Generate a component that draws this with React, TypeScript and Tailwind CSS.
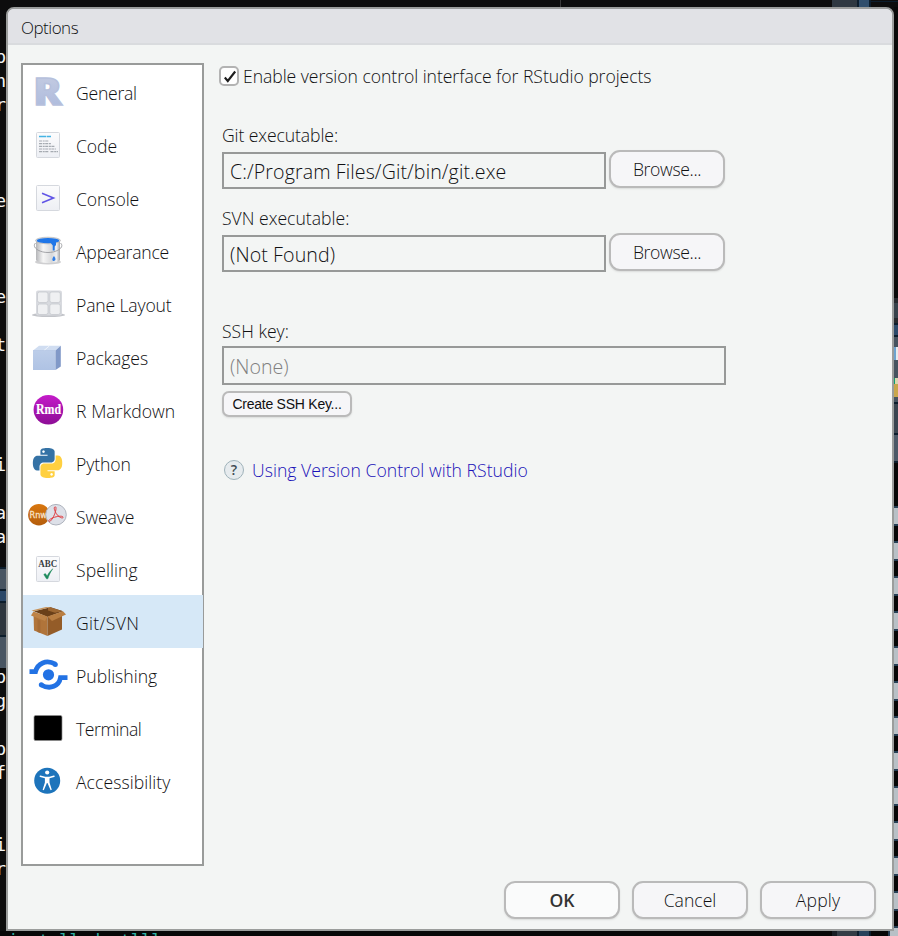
import { ReactNode } from "react";

const PY_TOP =
  "M14.25.18l.9.2.73.26.59.3.45.32.34.34.25.34.16.33.1.3.04.26.02.2-.01.13V8.5l-.05.63-.13.55-.21.46-.26.38-.3.31-.33.25-.35.19-.35.14-.33.1-.3.07-.26.04-.21.02H8.77l-.69.05-.59.14-.5.22-.41.27-.33.32-.27.35-.2.36-.15.37-.1.35-.07.32-.04.27-.02.21v3.06H3.17l-.21-.03-.28-.07-.32-.12-.35-.18-.36-.26-.36-.36-.35-.46-.32-.59-.28-.73-.21-.88-.14-1.05-.05-1.23.06-1.22.16-1.04.24-.87.32-.71.36-.57.4-.44.42-.33.42-.24.4-.16.36-.1.32-.05.24-.01h.16l.06.01h8.16v-.83H6.18l-.01-2.75-.02-.37.05-.34.11-.31.17-.28.25-.26.31-.23.38-.2.44-.18.51-.15.58-.12.64-.1.71-.06.77-.04.84-.02 1.27.05zm-6.3 1.98l-.23.33-.08.41.08.41.23.34.33.22.41.09.41-.09.33-.22.23-.34.08-.41-.08-.41-.23-.33-.33-.22-.41-.09-.41.09z";
const PY_BOTTOM =
  "M21.04 6.11l.28.06.32.12.35.18.36.27.36.35.35.47.32.59.28.73.21.88.14 1.04.05 1.23-.06 1.23-.16 1.04-.24.86-.32.71-.36.57-.4.45-.42.33-.42.24-.4.16-.36.09-.32.05-.24.02-.16-.01h-8.22v.82h5.84l.01 2.76.02.36-.05.34-.11.31-.17.29-.25.25-.31.24-.38.2-.44.17-.51.15-.58.13-.64.09-.71.07-.77.04-.84.01-1.27-.04-1.07-.14-.9-.2-.73-.25-.59-.3-.45-.33-.34-.34-.25-.34-.16-.33-.1-.3-.04-.25-.02-.2.01-.13v-5.34l.05-.64.13-.54.21-.46.26-.38.3-.32.33-.24.35-.2.35-.14.33-.1.3-.06.26-.04.21-.02.13-.01h5.84l.69-.05.59-.14.5-.21.41-.28.33-.32.27-.35.2-.36.15-.36.1-.35.07-.32.04-.28.02-.21V6.07h2.09l.14.01zm-6.47 14.25l-.23.33-.08.41.08.41.23.33.33.23.41.08.41-.08.33-.23.23-.33.08-.41-.08-.41-.23-.33-.33-.23-.41-.08-.41.08z";

function Sheet() {
  return <rect x="8.5" y="14.5" width="23" height="25" rx="1" fill="url(#sheet)" stroke="#d5d8de" />;
}

function Defs() {
  return (
    <svg className="h-0 w-0 shrink-0" aria-hidden="true">
      <defs>
        <linearGradient id="sheet" x1="0" y1="0" x2="0" y2="1">
          <stop offset="0" stopColor="#fcfcfd" />
          <stop offset="1" stopColor="#edeff4" />
        </linearGradient>
        <linearGradient id="rlogo" x1="0" y1="0" x2="0" y2="1">
          <stop offset="0" stopColor="#c9cfe3" />
          <stop offset="1" stopColor="#a9b8dc" />
        </linearGradient>
        <linearGradient id="metal" x1="0" y1="0" x2="1" y2="0">
          <stop offset="0" stopColor="#b4b5b8" />
          <stop offset="0.3" stopColor="#f6f6f6" />
          <stop offset="0.65" stopColor="#d8d9db" />
          <stop offset="0.85" stopColor="#efeff0" />
          <stop offset="1" stopColor="#a2a3a6" />
        </linearGradient>
        <linearGradient id="pkg" x1="0" y1="0" x2="0" y2="1">
          <stop offset="0" stopColor="#bccde9" />
          <stop offset="1" stopColor="#afc3e4" />
        </linearGradient>
        <linearGradient id="rmd" x1="0" y1="0" x2="0" y2="1">
          <stop offset="0" stopColor="#c41bc9" />
          <stop offset="1" stopColor="#8d0e96" />
        </linearGradient>
        <linearGradient id="rnw" x1="0" y1="0" x2="0" y2="1">
          <stop offset="0" stopColor="#d9770f" />
          <stop offset="1" stopColor="#b45d0c" />
        </linearGradient>
      </defs>
    </svg>
  );
}

const items: { label: string; track: string; icon: ReactNode }[] = [
  {
    label: "General",
    track: "tracking-[-0.25px]",
    icon: (
      <text x="5.2" y="39.5" fontSize="36.5" fontWeight="800" fontFamily="Open Sans, sans-serif" textLength="28.5" lengthAdjust="spacingAndGlyphs" fill="url(#rlogo)" stroke="#b6c0dc" strokeWidth="1.4">
        R
      </text>
    ),
  },
  {
    label: "Code",
    track: "tracking-[-0.1px]",
    icon: (
      <>
        <Sheet />
        <path d="M11 18.5h12" stroke="#45b4e4" strokeWidth="1.3" strokeDasharray="7 0.6 5" />
        <path d="M11 23h10M11 25.7h12M11 28.3h16M11 31h17M11 33.7h10M22.5 33.7h7.5" stroke="#a5aab1" strokeWidth="1.2" strokeDasharray="3 0.7 2 0.5" />
      </>
    ),
  },
  {
    label: "Console",
    track: "tracking-[-0.1px]",
    icon: (
      <>
        <Sheet />
        <path d="M14 22.3L25.5 27L14 31.8" fill="none" stroke="#6155e6" strokeWidth="1.6" />
      </>
    ),
  },
  {
    label: "Appearance",
    track: "tracking-[-0.2px]",
    icon: (
      <>
        <ellipse cx="20" cy="38" rx="13" ry="2.5" fill="#cfcfd1" />
        <path d="M8 17v19c2 4 22 4 24 0V17z" fill="url(#metal)" />
        <ellipse cx="20" cy="16.5" rx="12.5" ry="3.3" fill="#d9dadd" stroke="#a9aaad" strokeWidth="0.6" />
        <ellipse cx="20" cy="16.7" rx="11.3" ry="2.6" fill="#1f76e8" />
        <path d="M22 18h6v3l-1.3 1.5v4h-2v-5z" fill="#1f76e8" />
        <path d="M26 32c2 2.5 2 4.500 0 5c-2 0-2.500-2 0-5" fill="#2f7de6" />
        <path d="M7.5 19c-4 4 3 9.500 12.500 9.500s17-5.500 12.500-9.500" fill="none" stroke="#9a9b9f" strokeWidth="0.900" />
      </>
    ),
  },
  {
    label: "Pane Layout",
    track: "tracking-[-0.15px]",
    icon: (
      <>
        <ellipse cx="20.500" cy="38" rx="16.500" ry="2" fill="#c2c4c9" />
        <rect x="8" y="13.500" width="26" height="25" rx="2" fill="#d8dadf" />
        <g fill="#eff0f2" stroke="#c3c6cc" strokeWidth="0.700">
          <rect x="9.500" y="15" width="10.500" height="10.500" rx="2" />
          <rect x="21.800" y="15" width="10.500" height="10.500" rx="2" />
          <rect x="9.500" y="27" width="10.500" height="10.500" rx="2" />
          <rect x="21.800" y="27" width="10.500" height="10.500" rx="2" />
        </g>
      </>
    ),
  },
  {
    label: "Packages",
    track: "tracking-[-0.1px]",
    icon: (
      <>
        <path d="M5 20.500L11 15.800H32.800L27.500 20.500z" fill="#d0ddf1" />
        <path d="M5 20.500H27.500V40H5z" fill="url(#pkg)" />
        <path d="M27.500 20.500L32.800 15.800V36.500L27.500 40z" fill="#8199c8" />
        <path d="M16 20.500L21.500 15.800" stroke="#f2f6fc" strokeWidth="0.900" />
        <path d="M5 20.500H27.500" stroke="#a9bde0" strokeWidth="0.600" />
      </>
    ),
  },
  {
    label: "R Markdown",
    track: "tracking-[0.05px]",
    icon: (
      <>
        <circle cx="20.400" cy="26.700" r="14.800" fill="url(#rmd)" />
        <text x="8" y="30.800" fontSize="14" fontWeight="700" fontFamily="Liberation Serif, serif" textLength="25" lengthAdjust="spacingAndGlyphs" fill="#fff" stroke="#fff" strokeWidth="0.200">
          Rmd
        </text>
      </>
    ),
  },
  {
    label: "Python",
    track: "tracking-[-0.1px]",
    icon: (
      <g transform="translate(4.900 12) scale(1.220 1.250)">
        <path d={PY_TOP} fill="#3572a5" />
        <path d={PY_BOTTOM} fill="#ffd040" />
      </g>
    ),
  },
  {
    label: "Sweave",
    track: "tracking-[-0.15px]",
    icon: (
      <>
        <circle cx="10.900" cy="25.700" r="10.800" fill="url(#rnw)" />
        <text x="1.500" y="28.800" fontSize="9" fontWeight="400" fontFamily="DejaVu Sans, sans-serif" textLength="17.500" lengthAdjust="spacingAndGlyphs" fill="#f8e2c6" stroke="#f8e2c6" strokeWidth="0.300">
          Rnw
        </text>
        <circle cx="28" cy="25.700" r="10.300" fill="#dde0e8" stroke="#aeb3bd" />
        <path
          d="M26.300 18.500c2-2 2 1 1.200 4c-1.200 4.500-4 9-5.700 10c-2.200 0-1-2.500 4.800-4.300c4-1.200 8.500-1.500 8.500 .200c-.500 1.700-5.300-.600-7.600-5.200c-1-2-1.500-4-1.200-4.700z"
          fill="none"
          stroke="#e03a3e"
          strokeWidth="1"
        />
      </>
    ),
  },
  {
    label: "Spelling",
    track: "tracking-[0.05px]",
    icon: (
      <>
        <Sheet />
        <text x="10.300" y="25.200" fontSize="10" fontWeight="700" fontFamily="Liberation Serif, serif" textLength="19" lengthAdjust="spacingAndGlyphs" fill="#3a3f43">
          ABC
        </text>
        <path d="M15.800 32.500l1.500-.900l1.900 2.500c1.200-2.800 3-5.200 5.600-7.300c-2.300 3.200-3.900 6.500-5 10h-1.300z" fill="#1d8a5c" stroke="#1d8a5c" strokeWidth="0.500" />
      </>
    ),
  },
  {
    label: "Git/SVN",
    track: "tracking-[0.3px]",
    icon: (
      <>
        <path d="M5.500 18.500L19.500 22V41L6 35.500z" fill="#b0743a" />
        <path d="M19.500 22L34 18.500V34.500L19.500 41z" fill="#945c28" />
        <path d="M6 16.300L22.500 12.300L35 16.300L19.500 22z" fill="#6b4019" />
        <path d="M20 12.500L22.500 12.300L35 16.300L27 17.800L20 15.500z" fill="#9d6732" />
        <path d="M6 16.300L22.500 12.300L18 11.900L3.500 15.500z" fill="#c8935a" />
        <path d="M5.500 16.500L19.500 21.500L17 26L3 20.500z" fill="#be8347" />
        <path d="M19.500 21.500L35 16.300L38 19.500L24 26z" fill="#b97e42" />
        <path d="M9.500 24.500L12.500 25.500V38L9.500 37z" fill="#a56b34" />
      </>
    ),
  },
  {
    label: "Publishing",
    track: "tracking-[0px]",
    icon: (
      <>
        <circle cx="20.500" cy="26.800" r="5.600" fill="#2272e4" />
        <path d="M1.500 23.600H7.500C9.500 15.500 18 11 27.500 16.200" fill="none" stroke="#2272e4" strokeWidth="4.800" />
        <circle cx="27.300" cy="16.500" r="2.500" fill="#2272e4" />
        <path d="M39.500 29.600H32.500C31 38 22.500 42 13.200 37" fill="none" stroke="#2272e4" strokeWidth="4.800" />
        <circle cx="13.300" cy="36.800" r="2.500" fill="#2272e4" />
      </>
    ),
  },
  {
    label: "Terminal",
    track: "tracking-[-0.45px]",
    icon: <rect x="6" y="14.500" width="28" height="25" rx="1.500" fill="#000" stroke="#8e8e8e" strokeWidth="0.700" />,
  },
  {
    label: "Accessibility",
    track: "tracking-[0.05px]",
    icon: (
      <>
        <circle cx="19.200" cy="26.800" r="13" fill="#1d74bb" />
        <circle cx="19.200" cy="18.500" r="2.100" fill="#fff" />
        <path d="M12.300 22.200L17 23.500H21.500L26 22.200" fill="none" stroke="#fff" strokeWidth="1.500" strokeLinecap="round" />
        <path d="M16.900 23h4.600v5.500l2.300 7.200l-1.200.500l-3.100-7.200h-.600l-3.100 7.200l-1.200-.500l2.300-7.200z" fill="#fff" />
      </>
    ),
  },
];

const leftGlyphs: [string, string][] = [
  ["", "h-[38px]"], ["p", "h-6"], ["n", "h-6"], ["r", "h-6"], ["", "h-[72px]"], ["e", "h-6"], ["", "h-[72px]"],
  ["e", "h-6"], ["", "h-6"], ["t", "h-6"], ["", "h-24"], ["i", "h-6"], ["", "h-6"], ["a", "h-6"], ["a", "h-6"], ["", "h-[18px]"],
];
const leftGlyphsLow: [string, string][] = [
  ["p", "h-6"], ["g", "h-6"], ["", "h-6"], ["p", "h-6"], ["f", "h-6"], ["", "h-12"], ["i", "h-6"], ["r", "h-6"],
];

function Glyphs({ rows }: { rows: [string, string][] }) {
  return (
    <>
      {rows.map(([g, h], i) => (
        <div key={i} className={`flex shrink-0 items-center justify-end ${h}`}>
          {g}
        </div>
      ))}
    </>
  );
}

function Button({ children, className = "" }: { children: ReactNode; className?: string }) {
  return (
    <button className={`flex items-center justify-center border-2 border-[#bababa] shadow-[0_1px_2px_rgba(0,0,0,0.1)] ${className}`}>
      {children}
    </button>
  );
}

const large = "h-[38px] w-[116px] rounded-[11px]";

export default function App() {
  return (
    <div className="flex h-[936px] w-[898px] flex-col overflow-hidden bg-[#0d0d0d] font-['Open_Sans','Noto_Sans',sans-serif] text-[17.6px] leading-6 font-[360] text-[#101012]">
      <Defs />
      <div className="flex h-[7px] shrink-0">
        <div className="w-[561px] border-r border-[#3a3a3a]" />
        <div className="flex-1" />
        <div className="w-[25px] bg-[#2f3841]" />
        <div className="w-[14px] border-x-2 border-[#0c1d2c] bg-[#304e6c]" />
        <div className="mt-px h-px w-[27px] bg-[#0c1d2c]" />
      </div>

      <div className="flex h-[924px] shrink-0">
        <div className="flex w-[6px] shrink-0 flex-col overflow-hidden font-['DejaVu_Sans_Mono',monospace] text-[18px] font-normal text-[#f4f4f4]">
          <Glyphs rows={leftGlyphs} />
          <div className="h-[24px] shrink-0 border-y-2 border-[#0c1d2c] bg-[#485562]" />
          <div className="h-[12px] shrink-0 border-b-2 border-[#0c1d2c] bg-[#2b4868]" />
          <div className="h-[34px] shrink-0 border-b-2 border-[#0c1d2c] bg-[#2d363e]" />
          <div className="h-[31px] shrink-0 bg-[#485562]" />
          <div className="-mt-[3px] flex flex-col">
            <Glyphs rows={leftGlyphsLow} />
          </div>
        </div>

        <main className="flex w-[888px] shrink-0 flex-col overflow-hidden rounded-t-[8px] border-2 border-[#9b9d9c] bg-[#f3f5f4]">
          <header className="flex h-[36px] shrink-0 items-center border-b-2 border-[#d9dbde] bg-[#e1e2e6] pl-[13px] pt-[3px]">
            <span className="text-[17px] tracking-[-0.5px]">Options</span>
          </header>
          <div className="flex min-h-0 flex-1 pl-[13px] pt-[18px]">
            <nav className="h-[803px] w-[183px] shrink-0 border-2 border-[#999b9a] bg-white">
              {items.map((it) => (
                <div key={it.label} className={`flex h-[53px] pl-[5px] ${it.label === "Git/SVN" ? "-mr-px bg-[#d6e8f7]" : ""}`}>
                  <svg width="40" height="53" viewBox="0 0 40 53" className="shrink-0">
                    {it.icon}
                  </svg>
                  <span className={`pl-2 pt-4 whitespace-nowrap ${it.track}`}>{it.label}</span>
                </div>
              ))}
            </nav>

            <section className="flex flex-1 flex-col pl-[18px] pt-[3px]">
              <label className="-ml-[3px] flex h-5 items-center gap-1">
                <span className="flex size-5 items-center justify-center rounded-[5px] border-2 border-[#b3b3b3] bg-white">
                  <svg width="16" height="16" viewBox="0 0 16 16">
                    <path d="M3.800 9.500L6.800 13L14.200 3.500" fill="none" stroke="#1e1e1e" strokeWidth="2.100" />
                  </svg>
                </span>
                <span className="-mt-px whitespace-nowrap tracking-[-0.05px]">Enable version control interface for RStudio projects</span>
              </label>

              <span className="mt-[37px] h-6 tracking-[-0.1px]">Git executable:</span>
              <div className="mt-[3px] flex gap-[3px]">
                <div className="mt-[2px] flex h-[37px] w-[384px] items-center border-2 border-[#979998] pl-[6px] pt-0.5 text-[19.600px] tracking-[0.1px]">C:/Program Files/Git/bin/git.exe</div>
                <Button className={`${large} bg-[#f6f6f8]`}>
                  <span className="tracking-[-0.35px]">Browse...</span>
                </Button>
              </div>
              <span className="mt-[17px] h-6 tracking-[0px]">SVN executable:</span>
              <div className="mt-[3px] flex gap-[3px]">
                <div className="mt-[2px] flex h-[37px] w-[384px] items-center border-2 border-[#979998] pl-[6px] pt-0.5 text-[19.600px] tracking-[0.1px]">(Not Found)</div>
                <Button className={`${large} bg-[#f6f6f8]`}>
                  <span className="tracking-[-0.35px]">Browse...</span>
                </Button>
              </div>

              <span className="mt-[47px] h-6 tracking-[0px]">SSH key:</span>
              <div className="mt-[3px] flex h-[39px] w-[504px] items-center border-2 border-[#979998] pl-[6px] pt-[3px] text-[19.600px] tracking-[0px] text-[#808080]">(None)</div>
              <Button className="mt-[6px] h-[26px] w-[130px] rounded-[7px] bg-[#f6f6f8] font-['Liberation_Sans',Arial,sans-serif] text-[14px]">
                <span className="whitespace-nowrap tracking-[-0.25px]">Create SSH Key...</span>
              </Button>

              <div className="mt-[43px] flex h-5 items-center pl-[2px]">
                <span className="flex size-5 items-center justify-center rounded-full border border-[#9fb2ba] bg-[#e6ebee] text-[14px] font-semibold text-[#3e4a52]">?</span>
                <a className="pl-2 whitespace-nowrap tracking-[0.03px] text-[#1a12b8]">Using Version Control with RStudio</a>
              </div>

              <footer className="mt-auto mb-[10px] mr-4 flex justify-end gap-3">
                <Button className={`${large} bg-[#fafbfb] font-[560] text-[#333]`}>OK</Button>
                <Button className={`${large} bg-[#f6f6f8]`}>Cancel</Button>
                <Button className={`${large} bg-[#f6f6f8]`}>
                  <span className="tracking-[0.2px]">Apply</span>
                </Button>
              </footer>
            </section>
          </div>
        </main>

        <div className="flex w-1 shrink-0 flex-col overflow-hidden">
          <div className="h-[291px] shrink-0 bg-[#090909]" />
          <div className="h-[25px] shrink-0 border-y-[5px] border-[#26292d] bg-[#37414a]" />
          <div className="h-[14px] shrink-0 border-y-2 border-[#0c1d2c] bg-[#2c4a6a]" />
          <div className="h-[10px] shrink-0 bg-[#46535f]" />
          <div className="h-[13px] shrink-0 border-l-2 border-[#6da3cf] bg-[#e8eaec]" />
          <div className="h-[18px] shrink-0 bg-[#46535f]" />
          <div className="h-[6px] shrink-0 border-l border-[#0f9f6c] bg-[#d8d6b0]" />
          <div className="h-[13px] shrink-0 bg-[#c9a64c]" />
          <div className="h-[7px] shrink-0 border-b-2 border-[#0c1d2c] bg-[#46535f]" />
          <div className="h-[31px] shrink-0 border-b-2 border-[#0c1d2c] bg-[#3a444f]" />
          <div className="h-[28px] shrink-0 border-b-2 border-[#0c1d2c] bg-[#4b5866]" />
          <div className="h-[43px] shrink-0 bg-[#060606]" />
          {Array.from({ length: 13 }, (_, i) => (
            <div key={i} className="h-[35px] shrink-0 bg-[#060606]">
              <div className="h-5 border-y-2 border-[#263f55] bg-[#b8c0c6]" />
            </div>
          ))}
        </div>
      </div>

      <div className="flex h-[5px] shrink-0 overflow-hidden bg-[#070707]">
        <div className="h-[5px] w-[832px] overflow-hidden pl-[8px] font-['DejaVu_Sans_Mono',monospace] text-[17px] leading-[20px] text-[#2fb0a4]">install.devtlll</div>
        <div className="w-[5px] bg-[#171d23]" />
        <div className="w-5 bg-[#333c45]" />
        <div className="w-[14px] border-x-2 border-[#0c1d2c] bg-[#27425b]" />
        <div className="flex-1" />
        <div className="w-[10px] border-l-2 border-[#263f55] bg-[#b8c0c6]" />
      </div>
    </div>
  );
}
